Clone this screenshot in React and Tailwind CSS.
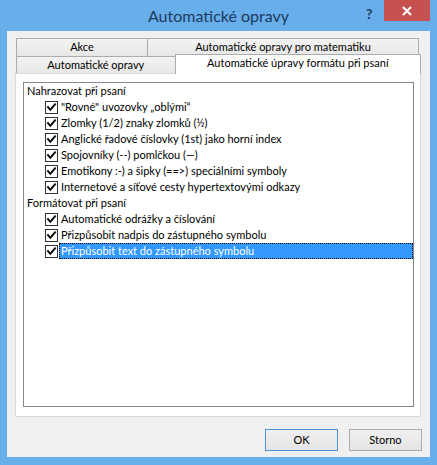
import React from "react";

const font = { fontFamily: "Lato, 'Noto Sans', sans-serif" };

function Check() {
  return (
    <div className="w-[13px] h-[13px] border border-[#333333] bg-white flex items-center justify-center shrink-0">
      <svg width="11" height="11" viewBox="0 0 11 11">
        <path d="M2 5.2 L4.3 7.8 L9 2.4" fill="none" stroke="#000" strokeWidth="1.9" strokeLinecap="square" />
      </svg>
    </div>
  );
}

function Row({ label, selected }) {
  return (
    <div className="h-[16px] flex items-center pl-[21px]">
      <Check />
      {selected ? (
        <div className="ml-[1px] h-[16px] flex-1 flex items-center bg-[#3399ff] text-white border border-dotted border-black pl-[1px]">
          {label}
        </div>
      ) : (
        <div className="ml-[2px] pl-[1px]">{label}</div>
      )}
    </div>
  );
}

export default function App() {
  return (
    <div
      className="w-[437px] h-[465px] bg-[#67aeea] flex flex-col px-[7px] pb-[8px] text-[11px] text-black"
      style={font}
    >
      {/* title bar */}
      <div className="h-[31px] flex items-center relative -mx-[7px]">
        <div className="flex-1 text-center text-[16px] text-[#1d3a5c] pt-[1px]">Automatické opravy</div>
        <div className="absolute left-[366px] top-[3px] text-[14px] font-bold text-[#1d3a5c]">?</div>
        <div className="absolute left-[384px] top-0 w-[46px] h-[21px] bg-[#c75050] flex items-center justify-center">
          <svg width="10" height="10" viewBox="0 0 10 10">
            <path d="M1 1 L9 9 M9 1 L1 9" stroke="#fff" strokeWidth="2" />
          </svg>
        </div>
      </div>
      {/* client */}
      <div className="flex-1 bg-[#f0f0f0] flex flex-col pt-[7px] pl-[8px]">
        <div className="w-[406px]">
          <div className="flex h-[18px] ml-[1px]">
            <div className="w-[131px] border-l border-t border-[#acacac] bg-gradient-to-b from-[#f3f3f3] to-[#e7e7e7] flex items-center justify-center">
              Akce
            </div>
            <div className="w-[272px] border-l border-t border-r border-[#acacac] bg-gradient-to-b from-[#f3f3f3] to-[#e7e7e7] flex items-center justify-center">
              Automatické opravy pro matematiku
            </div>
          </div>
          <div className="flex h-[17px] items-end ml-[1px]">
            <div className="w-[159px] h-[17px] border-l border-t border-[#acacac] bg-gradient-to-b from-[#f3f3f3] to-[#e7e7e7] flex items-center justify-center">
              Automatické opravy
            </div>
            <div className="w-[247px] h-[20px] relative top-[1px] z-10 border-l border-t border-r border-[#acacac] bg-white flex items-center justify-center pb-[2px]">
              Automatické úpravy formátu při psaní
            </div>
          </div>
          <div className="h-[344px] border border-[#d9d9d9] bg-white pt-[8px] pl-[7px]">
            <div className="w-[391px] h-[325px] border border-[#828790] bg-white">
              <div className="h-[16px] flex items-center pl-[3px]">Nahrazovat při psaní</div>
              <Row label={"\"Rovné\" uvozovky „oblými“"} />
              <Row label="Zlomky (1/2) znaky zlomků (½)" />
              <Row label="Anglické řadové číslovky (1st) jako horní index" />
              <Row label="Spojovníky (--) pomlčkou (—)" />
              <Row label="Emotikony :-) a šipky (==>) speciálními symboly" />
              <Row label="Internetové a síťové cesty hypertextovými odkazy" />
              <div className="h-[16px] flex items-center pl-[3px]">Formátovat při psaní</div>
              <Row label="Automatické odrážky a číslování" />
              <Row label="Přizpůsobit nadpis do zástupného symbolu" />
              <Row label="Přizpůsobit text do zástupného symbolu" selected />
            </div>
          </div>
        </div>
        <div className="flex justify-end gap-[11px] pr-[8px] mt-[12px]">
          <div className="w-[73px] h-[22px] border border-[#4b92d8] bg-gradient-to-b from-[#f0f0f0] to-[#e5e5e5] flex items-center justify-center">
            OK
          </div>
          <div className="w-[73px] h-[22px] border border-[#acacac] bg-gradient-to-b from-[#f0f0f0] to-[#e5e5e5] flex items-center justify-center">
            Storno
          </div>
        </div>
      </div>
    </div>
  );
}
